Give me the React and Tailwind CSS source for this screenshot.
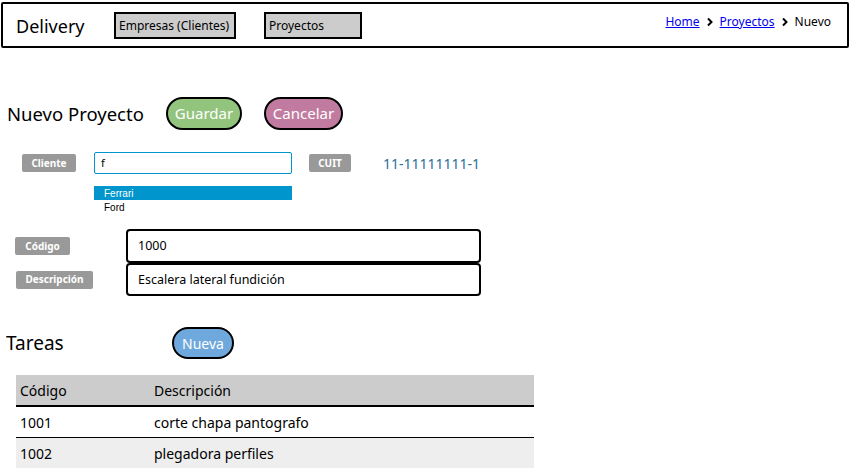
import React from "react";

const font = { fontFamily: '"Noto Sans", "Open Sans", sans-serif' };

function Tag({ children, className = "" }) {
  return (
    <span
      className={`flex h-[18px] items-center justify-center rounded-[2px] bg-[#999999] text-[10px] font-bold text-white ${className}`}
    >
      {children}
    </span>
  );
}

function Chevron() {
  return (
    <svg width="8" height="10" viewBox="0 0 8 10" className="mx-[6px]">
      <path d="M2 1.5 L5.5 5 L2 8.5" fill="none" stroke="#000" strokeWidth="2" />
    </svg>
  );
}

const tasks = [
  { code: "1001", desc: "corte chapa pantografo", bg: "bg-white" },
  { code: "1002", desc: "plegadora perfiles", bg: "bg-[#eeeeee]" },
];

export default function App() {
  return (
    <div className="h-[473px] w-[857px] overflow-hidden bg-white pt-[2px] text-black" style={font}>
      {/* top bar */}
      <header className="ml-[1px] flex h-[46px] w-[848px] items-center rounded-[2px] border-2 border-black pl-[13px]">
        <span className="w-[98px] pt-[3px] text-[18px]">Delivery</span>
        <span className="flex h-[27px] w-[122px] items-center border-2 border-black bg-[#cccccc] pl-[3px] pt-[1px] text-[12px]">
          Empresas (Clientes)
        </span>
        <span className="ml-[28px] flex h-[27px] w-[98px] items-center border-2 border-black bg-[#cccccc] pl-[3px] pt-[1px] text-[12px]">
          Proyectos
        </span>
        <nav className="mb-[6px] ml-auto mr-[16px] flex items-center text-[12px]">
          <a className="text-[#0000ee] underline" href="#">Home</a>
          <Chevron />
          <a className="text-[#0000ee] underline" href="#">Proyectos</a>
          <Chevron />
          <span>Nuevo</span>
        </nav>
      </header>

      {/* title + actions */}
      <div className="mt-[49px] flex h-[33px] items-center pl-[7px]">
        <h1 className="w-[159px] text-[18.5px]">Nuevo Proyecto</h1>
        <button className="flex h-[33px] w-[76px] items-center justify-center rounded-full border-2 border-black bg-[#93c47d] text-[15px] text-white">
          Guardar
        </button>
        <button className="ml-[22px] flex h-[33px] w-[79px] items-center justify-center rounded-full border-2 border-black bg-[#c27ba0] text-[15px] text-white">
          Cancelar
        </button>
      </div>

      {/* cliente */}
      <div className="mt-[22px] flex h-[22px] items-center">
        <Tag className="ml-[22px] w-[54px]">Cliente</Tag>
        <div className="ml-[18px] flex h-[22px] w-[198px] items-center rounded-[2px] border border-[#0096cd] pl-[6px] text-[11px]">
          f
        </div>
        <Tag className="ml-[17px] w-[42px]">CUIT</Tag>
        <span className="ml-[32px] text-[14px] text-[#2a6f97]">11-11111111-1</span>
      </div>
      <ul className="ml-[94px] mt-[12px] w-[198px] text-[10px]" style={{ fontFamily: '"Liberation Sans", Arial, sans-serif' }}>
        <li className="flex h-[14px] items-center bg-[#0096cd] pl-[10px] text-white">Ferrari</li>
        <li className="flex h-[14px] items-center pl-[10px]">Ford</li>
      </ul>

      {/* código / descripción */}
      <div className="mt-[15px] flex h-[34px] items-center">
        <Tag className="ml-[15px] w-[55px]">Código</Tag>
        <div className="ml-[56px] flex h-[34px] w-[355px] items-center rounded-[4px] border-2 border-black pl-[10px] pt-[1px] text-[12.5px]">
          1000
        </div>
      </div>
      <div className="flex h-[33px] items-center">
        <Tag className="ml-[16px] w-[77px]">Descripción</Tag>
        <div className="ml-[33px] flex h-[33px] w-[355px] items-center rounded-[4px] border-2 border-black pl-[10px] pt-[1px] text-[12.5px]">
          Escalera lateral fundición
        </div>
      </div>

      {/* tareas */}
      <div className="mt-[31px] flex h-[32px] items-center pl-[6px]">
        <h2 className="w-[166px] pt-[1px] text-[19px]">Tareas</h2>
        <button className="flex h-[32px] w-[62px] items-center justify-center rounded-full border-2 border-black bg-[#6fa8dc] text-[14px] text-white">
          Nueva
        </button>
      </div>

      <table className="ml-[16px] mt-[16px] w-[518px] border-collapse text-left text-[14px]">
        <thead>
          <tr className="h-[31px] border-b-2 border-black bg-[#cccccc]">
            <th className="w-[138px] pl-[4px] pt-[1px] font-normal">Código</th>
            <th className="pt-[1px] font-normal">Descripción</th>
          </tr>
        </thead>
        <tbody>
          {tasks.map((t, i) => (
            <tr key={t.code} className={`h-[31px] ${t.bg} ${i === 0 ? "border-b border-black" : ""}`}>
              <td className="pl-[4px] pt-[1px]">{t.code}</td>
              <td className="pt-[1px]">{t.desc}</td>
            </tr>
          ))}
        </tbody>
      </table>
    </div>
  );
}
